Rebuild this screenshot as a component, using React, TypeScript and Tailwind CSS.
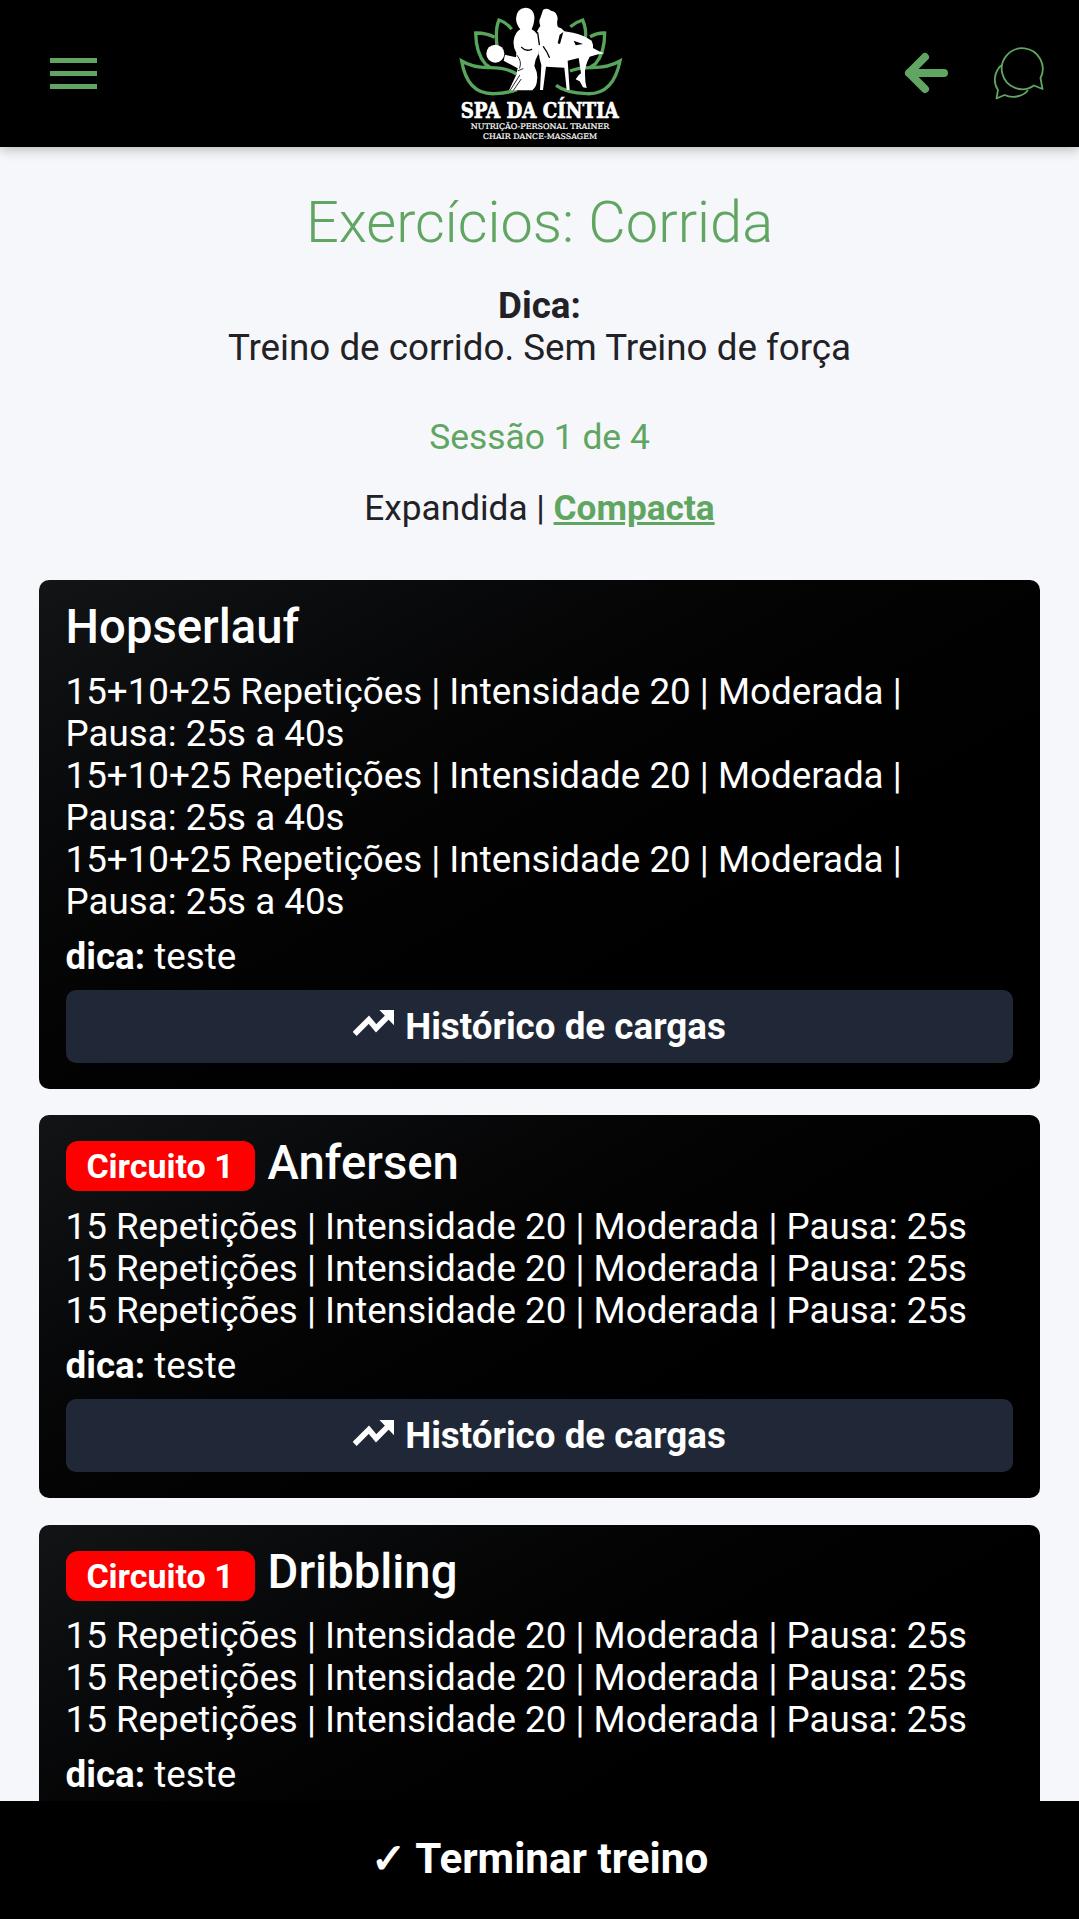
type Exercise = {
  name: string;
  circuit?: string;
  sets: string[];
  tip: string;
  hasHistory?: boolean;
};

const exercises: Exercise[] = [
  {
    name: "Hopserlauf",
    sets: [
      "15+10+25 Repetições | Intensidade 20 | Moderada | Pausa: 25s a 40s",
      "15+10+25 Repetições | Intensidade 20 | Moderada | Pausa: 25s a 40s",
      "15+10+25 Repetições | Intensidade 20 | Moderada | Pausa: 25s a 40s",
    ],
    tip: "teste",
    hasHistory: true,
  },
  {
    name: "Anfersen",
    circuit: "Circuito 1",
    sets: [
      "15 Repetições | Intensidade 20 | Moderada | Pausa: 25s",
      "15 Repetições | Intensidade 20 | Moderada | Pausa: 25s",
      "15 Repetições | Intensidade 20 | Moderada | Pausa: 25s",
    ],
    tip: "teste",
    hasHistory: true,
  },
  {
    name: "Dribbling",
    circuit: "Circuito 1",
    sets: [
      "15 Repetições | Intensidade 20 | Moderada | Pausa: 25s",
      "15 Repetições | Intensidade 20 | Moderada | Pausa: 25s",
      "15 Repetições | Intensidade 20 | Moderada | Pausa: 25s",
    ],
    tip: "teste",
  },
];

function Logo() {
  return (
    <svg viewBox="0 0 600 441" className="h-[147px] w-[200px]" aria-label="Spa da Cíntia">
      {/* lotus */}
      <g transform="translate(3 0)" fill="none" stroke="#58a55c" strokeWidth="10">
        <path d="M215 88 Q198 66 177 60 Q165 88 171 138" />
        <path d="M164 112 Q138 98 107 99 Q108 160 136 192 L150 202" />
        <path d="M230 222 Q200 202 146 203 Q96 202 65 183 Q82 285 165 281 Q205 279 230 269" />
        <path d="M391 80 Q408 66 428 60 Q440 88 436 115" />
        <path d="M450 110 Q472 98 494 99 Q494 160 466 192 L450 202" />
        <path d="M390 213 Q420 202 456 203 Q508 202 540 183 Q520 285 440 281 Q380 279 348 256" />
      </g>
      {/* figures */}
      <g transform="translate(2 0)">
        <g fill="#fff">
          <path d="M257 23 C276 23 286 38 284 58 C282 76 278 82 276 88 Q296 98 296 122 L296 162 Q286 178 284 198 Q296 222 292 240 Q292 258 278 271 L208 271 L230 224 L234 205 L192 182 L196 164 L229 172 L230 158 Q220 144 222 122 Q226 96 242 88 Q230 74 229 56 Q230 26 257 23 Z" />
          <circle cx="167" cy="161" r="27" />
          <path d="M310 30 Q322 22 334 32 Q352 34 354 56 Q350 74 356 82 Q366 84 374 94 L400 98 Q430 104 456 122 Q462 136 460 144 L478 154 L494 160 L470 164 L450 170 Q434 200 436 225 Q436 246 441 264 L430 262 L420 244 L412 240 L408 238 Q416 224 424 220 L417 174 L384 182 L390 270 L381 270 L374 203 L319 200 L310 270 L301 270 L305 195 Q300 178 296 160 L292 106 Q290 92 302 78 Q296 62 302 54 Z" />
        </g>
        <path fill="#000" d="M360 104 L371 96 L361 132 L354 130 Z M402 122 L430 132 L408 136 Z" />
        <g fill="none" stroke="#000" strokeWidth="4" strokeLinecap="round">
          <path d="M246 142 Q258 156 276 148 M294 98 L299 134 M311 140 Q322 154 329 172 M297 168 L294 200" />
          <path strokeWidth="2.5" d="M232 166 Q248 184 240 204 M212 270 L240 226 M222 270 L244 238 M236 212 L250 206" />
        </g>
      </g>
      <g fill="#fff" stroke="#fff" textAnchor="middle">
        <text x="302" y="353" className="font-['DejaVu_Serif_Condensed','DejaVu_Serif',serif] font-bold" strokeWidth="2" fontSize="66" textLength="474" lengthAdjust="spacingAndGlyphs">SPA DA CÍNTIA</text>
        <text x="303" y="387" className="font-['DejaVu_Serif',serif]" strokeWidth="0.6" fontSize="23" textLength="416" lengthAdjust="spacingAndGlyphs">NUTRIÇÃO-PERSONAL TRAINER</text>
        <text x="303" y="416" className="font-['DejaVu_Serif',serif]" strokeWidth="0.6" fontSize="23" textLength="342" lengthAdjust="spacingAndGlyphs">CHAIR DANCE-MASSAGEM</text>
      </g>
    </svg>
  );
}

function TrendIcon() {
  return (
    <svg viewBox="0 0 124 78" className="mr-[11px] mb-[7px] h-[26px] w-[41px]">
      <path d="M5 72 L48 29 L70 55 L106 19" fill="none" stroke="#fff" strokeWidth="17" />
      <path d="M80 0H124V46Z" fill="#fff" />
    </svg>
  );
}

function Header() {
  return (
    <header className="relative z-10 grid h-[147px] shrink-0 grid-cols-3 items-center bg-black shadow-[0_2px_12px_rgba(0,0,0,0.28)]">
      <div className="pl-[50px]">
        <div className="flex w-[47px] flex-col gap-2">
          <span className="h-[5px] bg-[#60a561]" />
          <span className="h-[5px] bg-[#60a561]" />
          <span className="h-[5px] bg-[#60a561]" />
        </div>
      </div>
      <div className="flex justify-center">
        <Logo />
      </div>
      <div className="flex items-center justify-end gap-[45px] pr-[34px] pb-px">
        <svg viewBox="0 0 44 42" className="h-[42px] w-11" fill="none" stroke="#60a561" strokeWidth="8" strokeLinecap="round" strokeLinejoin="round">
          <path d="M40 21H5M21 5L5 21L21 37" />
        </svg>
        <svg viewBox="0 0 52 54" className="h-[54px] w-[52px]" fill="none" stroke="#60a561" strokeWidth="1.8" strokeLinejoin="round">
          <path d="M47.500 32 L49.500 43 L41 39.500 A20.500 20.500 0 1 1 47.500 32 Z" />
          <path d="M8 19.500 C1 26 0 37 5 44 L3.500 52.500 L11.500 49 C20 53 31 50 35 44" />
        </svg>
      </div>
    </header>
  );
}

function ExerciseCard({ name, circuit, sets, tip, hasHistory }: Exercise) {
  return (
    <article className="rounded-[10px] bg-linear-150 from-[#131416] to-black to-90% p-[26.25px] text-white">
      <div className="mb-[13px] flex h-[51.5px] items-center gap-[13px]">
        {circuit ? (
          <span className="mb-[2px] flex h-[50px] w-[189px] items-center justify-center rounded-[12px] bg-[#ff0000] text-[34px] font-bold">
            {circuit}
          </span>
        ) : null}
        <h2 className="-mt-2 text-[47.25px] leading-none font-medium">{name}</h2>
      </div>
      {sets.map((set, i) => (
        <p key={i}>{set}</p>
      ))}
      <p className="mt-[13px] mb-[12px]">
        <strong>dica:</strong> {tip}
      </p>
      {hasHistory ? (
        <button className="flex h-[73px] w-full items-center justify-center rounded-[10px] bg-[#202838] pt-px font-bold">
          <TrendIcon />
          Histórico de cargas
        </button>
      ) : null}
    </article>
  );
}

export default function App() {
  return (
    <div className="flex h-[1919px] w-[1079px] flex-col overflow-hidden bg-[#f6f7fa] font-[Roboto,sans-serif] text-[36.75px] leading-[42px] text-[#212126]">
      <Header />
      <main className="min-h-0 flex-1 overflow-hidden px-[39.3px] text-center">
        <h1 className="mt-[42px] text-[57.75px] leading-[66px] font-light text-[#60a561]">
          Exercícios: Corrida
        </h1>
        <p className="mt-[30px]">
          <strong>Dica:</strong>
          <br />
          Treino de corrido. Sem Treino de força
        </p>
        <p className="mt-[47px] text-[35.4px] text-[#60a561]">Sessão 1 de 4</p>
        <p className="mt-[29px] text-[35.2px]">
          Expandida |{" "}
          <a href="#" className="font-bold text-[#60a561] underline">
            Compacta
          </a>
        </p>
        <div className="mt-[51px] flex flex-col gap-[26.25px] text-left">
          {exercises.map((exercise) => (
            <ExerciseCard key={exercise.name} {...exercise} />
          ))}
        </div>
      </main>
      <footer className="flex h-[118px] shrink-0 items-center justify-center bg-black pb-[3px] text-[42.2px] font-bold text-white">
        ✓ Terminar treino
      </footer>
    </div>
  );
}
